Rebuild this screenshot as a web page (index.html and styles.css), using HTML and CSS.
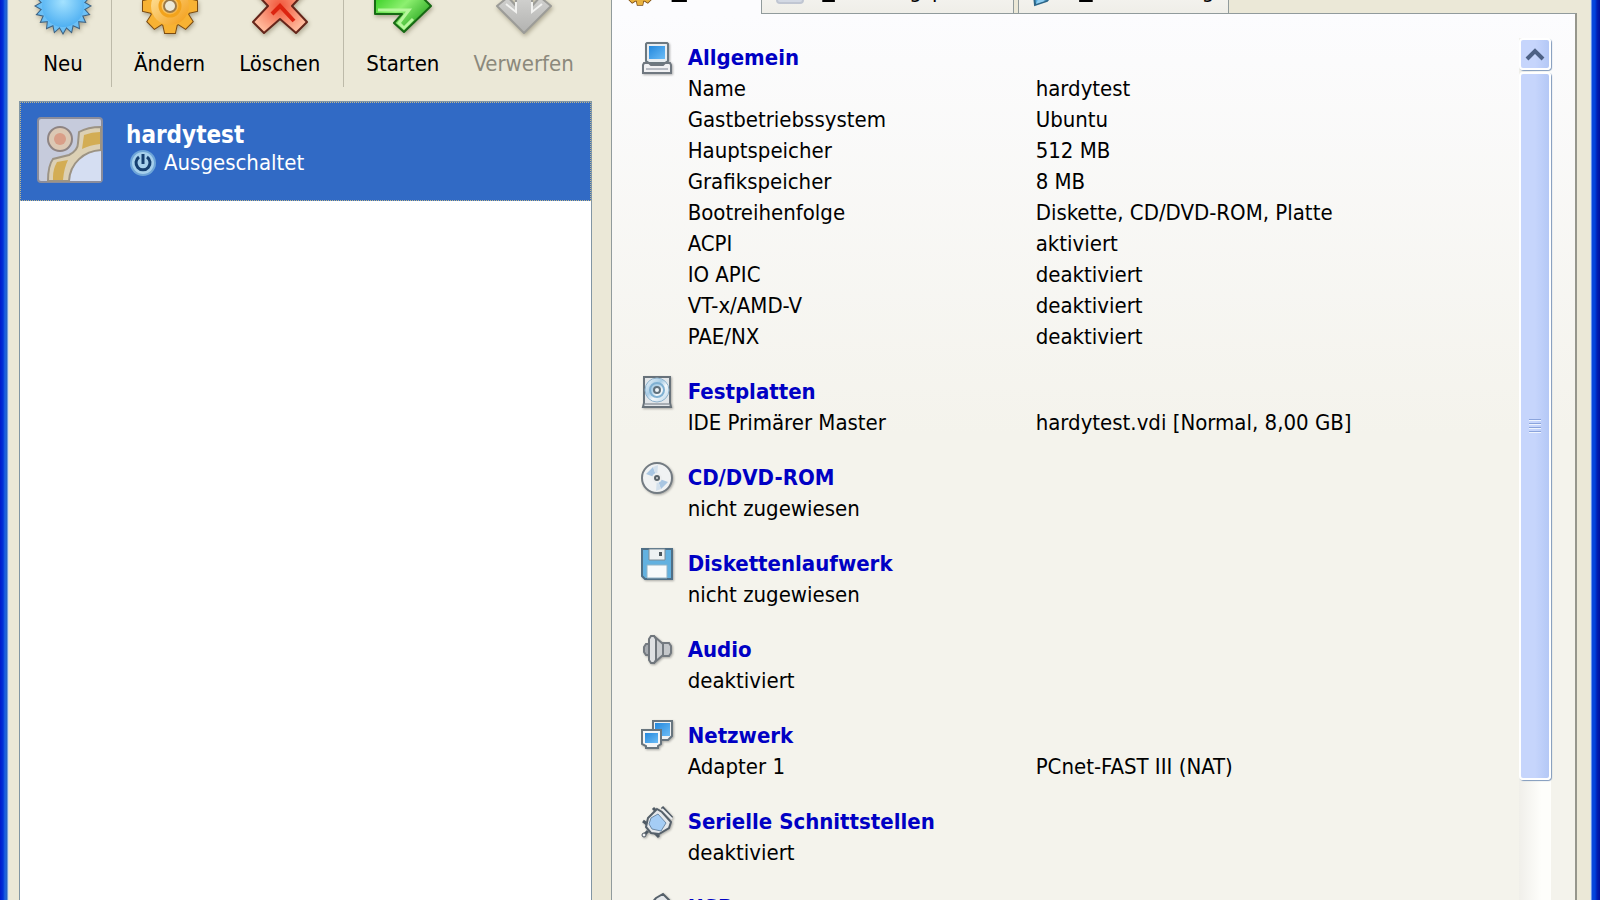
FILE: index.html
```html
<!DOCTYPE html>
<html lang="de">
<head>
    <meta charset="UTF-8">
    <meta name="viewport" content="width=device-width, initial-scale=1.0">
    <title>VirtualBox</title>
    <link rel="stylesheet" href="styles.css">
</head>
<body>
    <!-- Farbverläufe und wiederholte Formen -->
    <svg class="defs" aria-hidden="true">
        <defs>
            <radialGradient id="blau" cx="50%" cy="40%" r="60%">
                <stop offset="0" stop-color="#a4e2ff"/>
                <stop offset="1" stop-color="#4fb0f2"/>
            </radialGradient>
            <linearGradient id="gold" x1="0" y1="0" x2="1" y2="1">
                <stop offset="0" stop-color="#ffe9a8"/>
                <stop offset="1" stop-color="#f39a12"/>
            </linearGradient>
            <radialGradient id="rot" gradientUnits="userSpaceOnUse" cx="32" cy="34" r="28">
                <stop offset="0" stop-color="#f0553a"/>
                <stop offset="1" stop-color="#ffb89a"/>
            </radialGradient>
            <linearGradient id="gruen" x1="0" y1="0" x2="1" y2="1">
                <stop offset="0.2" stop-color="#3fd22a"/>
                <stop offset="0.5" stop-color="#8df070"/>
                <stop offset="0.9" stop-color="#1b9c16"/>
            </linearGradient>
            <linearGradient id="grau" x1="0" y1="0" x2="0" y2="1">
                <stop offset="0" stop-color="#e4e4e2"/>
                <stop offset="1" stop-color="#b2b2b0"/>
            </linearGradient>
            <linearGradient id="schirm" x1="0" y1="0" x2="1" y2="1">
                <stop offset="0" stop-color="#2388dd"/>
                <stop offset="1" stop-color="#6cbcf6"/>
            </linearGradient>
            <linearGradient id="scheibe" x1="0" y1="0" x2="1" y2="1">
                <stop offset="0" stop-color="#f4f8fb"/>
                <stop offset="0.4" stop-color="#a9cde6"/>
                <stop offset="0.6" stop-color="#f4f8fb"/>
                <stop offset="1" stop-color="#b4d2e6"/>
            </linearGradient>
            <path id="zacke" d="M0-27 4-20V20L0 27-4 20V-20z"/>
            <g id="stern">
                <circle r="21"/>
                <use href="#zacke"/>
                <use href="#zacke" transform="rotate(18)"/>
                <use href="#zacke" transform="rotate(36)"/>
                <use href="#zacke" transform="rotate(54)"/>
                <use href="#zacke" transform="rotate(72)"/>
                <use href="#zacke" transform="rotate(90)"/>
                <use href="#zacke" transform="rotate(108)"/>
                <use href="#zacke" transform="rotate(126)"/>
                <use href="#zacke" transform="rotate(144)"/>
                <use href="#zacke" transform="rotate(162)"/>
            </g>
            <g id="zahnrad">
                <circle r="20"/>
                <path d="M-7-18-5-27H5L7-18V18L5 27H-5L-7 18z"/>
                <path d="M-7-18-5-27H5L7-18V18L5 27H-5L-7 18z" transform="rotate(45)"/>
                <path d="M-7-18-5-27H5L7-18V18L5 27H-5L-7 18z" transform="rotate(90)"/>
                <path d="M-7-18-5-27H5L7-18V18L5 27H-5L-7 18z" transform="rotate(135)"/>
            </g>
        </defs>
    </svg>

    <div class="window">
        <div class="left">
            <div class="toolbar">
                <button class="tool tool-new">
                    <svg viewBox="0 0 64 64">
                        <g transform="translate(32 34)">
                            <use href="#stern" fill="#254a6c" stroke="#3a5f80" stroke-width="2"/>
                            <use href="#stern" fill="#6cc0f6"/>
                            <circle r="21" fill="url(#blau)"/>
                        </g>
                    </svg>
                    <span>Neu</span>
                </button>
                <div class="sep"></div>
                <button class="tool">
                    <svg viewBox="0 0 64 64">
                        <g transform="translate(32 34)">
                            <use href="#zahnrad" fill="#7a4a10" stroke="#7a4a10" stroke-width="2"/>
                            <use href="#zahnrad" fill="#f7b233"/>
                            <circle r="19" fill="url(#gold)"/>
                            <circle r="10" fill="none" stroke="#f2a31c" stroke-width="3"/>
                            <circle r="7" fill="#9a7a4a"/>
                            <circle r="5" fill="#ece9d8"/>
                        </g>
                    </svg>
                    <span>Ändern</span>
                </button>
                <button class="tool">
                    <svg viewBox="0 0 64 64">
                        <path d="M32 21 46 6 59 18 44 34 59 50 48 61 32 47 16 61 5 50 20 34 5 18 18 6z" fill="url(#rot)" stroke="#65251a" stroke-width="2" stroke-linejoin="round"/>
                        <path d="M24 42 32 34 46 49" fill="none" stroke="#dc2410" stroke-width="4"/>
                    </svg>
                    <span>Löschen</span>
                </button>
                <div class="sep"></div>
                <button class="tool">
                    <svg viewBox="0 0 64 64">
                        <path d="M4 25H31L23 16 33 7 60 34 33 60 23 51 31 42H4z" fill="url(#gruen)" stroke="#176a14" stroke-width="2" stroke-linejoin="round"/>
                        <path d="M7 38H38L28 51 33 56 42 47" fill="none" stroke="#b6f79c" stroke-width="3"/>
                    </svg>
                    <span>Starten</span>
                </button>
                <button class="tool" disabled>
                    <svg viewBox="0 0 64 64">
                        <path d="M24 4H40V34L48 25 59 34 32 61 5 34 16 25 24 34z" fill="url(#grau)" stroke="#9c9c98" stroke-width="2" stroke-linejoin="round"/>
                        <path d="M24 30V40L14 32M40 30V40L50 32" fill="none" stroke="#f2f2f0" stroke-width="2"/>
                    </svg>
                    <span>Verwerfen</span>
                </button>
            </div>

            <div class="vm-list">
                <button class="vm">
                    <svg class="vm-icon" viewBox="0 0 66 66">
                        <rect x="1" y="1" width="64" height="64" rx="3" fill="#c6cbdc" stroke="#8b8d9c" stroke-width="2"/>
                        <path d="M33 64C34 46 46 35 64 34V64z" fill="#d5def2"/>
                        <path d="M11 64C11 54 12 47 16 42L32 38C38 35 41 31 41 26L42 15C49 11 56 10 64 10V33C47 34 33 46 32 64z" fill="#dcd0b4" stroke="#9c9384" stroke-width="2"/>
                        <path d="M16 60Q16 52 20 45L31 43Q27 51 26 63H16zM47 18Q55 15 63 15V27Q53 28 45 32z" fill="#d3ad54"/>
                        <circle cx="23" cy="22" r="12" fill="#dcc8b4" stroke="#8e8483" stroke-width="2"/>
                        <circle cx="23" cy="22" r="6" fill="#d99e88"/>
                    </svg>
                    <span class="vm-text">
                        <span class="vm-name">hardytest</span>
                        <span class="vm-state">
                            <svg viewBox="0 0 28 28">
                                <circle cx="14" cy="14" r="13" fill="#6fa6d8"/>
                                <circle cx="14" cy="14" r="11" fill="#a6d0ec"/>
                                <path d="M10 8A7 7 0 1 0 18 8M14 5V15" fill="none" stroke="#153f70" stroke-width="3"/>
                            </svg>
                            Ausgeschaltet
                        </span>
                    </span>
                </button>
            </div>
        </div>

        <div class="right">
            <div class="tabs" role="tablist">
                <button class="tab active" role="tab" aria-selected="true">
                    <svg viewBox="0 0 64 64">
                        <g transform="translate(32 33)">
                            <use href="#zahnrad" fill="#7a4a10" stroke="#7a4a10" stroke-width="3"/>
                            <use href="#zahnrad" fill="#e9b23f"/>
                            <circle r="8" fill="#fcfcfe" stroke="#7a4a10" stroke-width="3"/>
                        </g>
                    </svg>
                    <span><u>D</u>etails</span>
                </button>
                <button class="tab" role="tab" aria-selected="false">
                    <svg viewBox="0 0 32 32">
                        <rect x="3" y="4" width="26" height="24" rx="3" fill="#d3d9e4" stroke="#c0c6d2" stroke-width="2"/>
                    </svg>
                    <span><u>S</u>icherungspunkte</span>
                </button>
                <button class="tab tab-last" role="tab" aria-selected="false">
                    <svg viewBox="0 0 32 32">
                        <path d="M4 30 3 20 20 4 27 12 16 26z" fill="#54a9dc" stroke="#2d6688" stroke-width="2"/>
                        <path d="M5 29 14 26 8 22z" fill="#8fcdf0"/>
                    </svg>
                    <span><u>B</u>eschreibung</span>
                </button>
            </div>

            <div class="panel">
                <div class="details">
                    <section>
                        <svg viewBox="0 0 32 32">
                            <path d="M6 1H26L27 2V19L24 21H8L5 19V2z" fill="#e9edf0" stroke="#6c7880" stroke-width="2"/>
                            <rect x="8" y="4" width="16" height="13" fill="url(#schirm)"/>
                            <path d="M3 21H8L10 23H22L24 21H29L30 23V31H2V23z" fill="#f1f1f3" stroke="#707880" stroke-width="2"/>
                            <path d="M5 27H27" stroke="#b8bcc4" stroke-width="2"/>
                        </svg>
                        <h2><a href="#allgemein">Allgemein</a></h2>
                        <dl>
                            <dt>Name</dt><dd>hardytest</dd>
                            <dt>Gastbetriebssystem</dt><dd>Ubuntu</dd>
                            <dt>Hauptspeicher</dt><dd>512 MB</dd>
                            <dt>Grafikspeicher</dt><dd>8 MB</dd>
                            <dt>Bootreihenfolge</dt><dd>Diskette, CD/DVD-ROM, Platte</dd>
                            <dt>ACPI</dt><dd>aktiviert</dd>
                            <dt>IO APIC</dt><dd>deaktiviert</dd>
                            <dt>VT-x/AMD-V</dt><dd>deaktiviert</dd>
                            <dt>PAE/NX</dt><dd>deaktiviert</dd>
                        </dl>
                    </section>
                    <section>
                        <svg viewBox="0 0 32 32">
                            <path d="M3 1H29V27L30 31H2L3 27z" fill="#e2e6e9" stroke="#68727a" stroke-width="2"/>
                            <circle cx="16" cy="14" r="12" fill="url(#scheibe)" stroke="#8fb3cc"/>
                            <circle cx="16" cy="14" r="7" fill="none" stroke="#7fb0d2" stroke-width="2"/>
                            <circle cx="16" cy="14" r="3" fill="#eef4f8" stroke="#60707c" stroke-width="2"/>
                            <path d="M4 28H28" stroke="#a8aeb4" stroke-width="2"/>
                        </svg>
                        <h2><a href="#festplatten">Festplatten</a></h2>
                        <dl>
                            <dt>IDE Primärer Master</dt><dd>hardytest.vdi [Normal, 8,00 GB]</dd>
                        </dl>
                    </section>
                    <section>
                        <svg viewBox="0 0 32 32">
                            <circle cx="16" cy="16" r="15" fill="#f0f2f3" stroke="#737b82" stroke-width="2"/>
                            <path d="M16 16 5 12 12 5zM16 16 27 20 20 27z" fill="#a9c6e2"/>
                            <path d="M16 16 12 5 17 3zM16 16 20 27 15 29z" fill="#d3e0ec"/>
                            <circle cx="16" cy="16" r="5" fill="#eceeef"/>
                            <circle cx="16" cy="16" r="2" fill="#d8dadb" stroke="#59636a" stroke-width="2"/>
                        </svg>
                        <h2><a href="#cd">CD/DVD-ROM</a></h2>
                        <dl>
                            <dt>nicht zugewiesen</dt>
                        </dl>
                    </section>
                    <section>
                        <svg viewBox="0 0 32 32">
                            <path d="M1 1H31V31H4L1 28z" fill="#62b1e0" stroke="#4f6f86" stroke-width="2"/>
                            <path d="M8 1H24V12H8z" fill="#edf1f2" stroke="#7c8c96"/>
                            <path d="M18 4H21V8H18z" fill="#4b565c"/>
                            <path d="M6 17H26V30H6z" fill="#f7fafb" stroke="#8fb2c6"/>
                        </svg>
                        <h2><a href="#diskette">Diskettenlaufwerk</a></h2>
                        <dl>
                            <dt>nicht zugewiesen</dt>
                        </dl>
                    </section>
                    <section>
                        <svg viewBox="0 0 32 32">
                            <path d="M8 10H5L3 13V18L5 21H8z" fill="#a7abb0" stroke="#747a80" stroke-width="2"/>
                            <path d="M14 3 22 10V21L14 28z" fill="#c9cccf" stroke="#747a80" stroke-width="2"/>
                            <path d="M8 5 10 2H13L15 5V26L13 29H10L8 26z" fill="#dfe1e3" stroke="#70767c" stroke-width="2"/>
                            <path d="M22 9H28L30 12V19L28 22H22z" fill="#c4c7ca" stroke="#747a80" stroke-width="2"/>
                        </svg>
                        <h2><a href="#audio">Audio</a></h2>
                        <dl>
                            <dt>deaktiviert</dt>
                        </dl>
                    </section>
                    <section>
                        <svg viewBox="0 0 32 32">
                            <path d="M12 1H31V16L27 20H12z" fill="#eef1f3" stroke="#68757e" stroke-width="2"/>
                            <rect x="14" y="3" width="15" height="13" fill="url(#schirm)"/>
                            <path d="M1 10H20V24L17 26V28H5V26L1 24z" fill="#f3f5f6" stroke="#68757e" stroke-width="2"/>
                            <rect x="4" y="13" width="13" height="10" fill="url(#schirm)"/>
                        </svg>
                        <h2><a href="#netzwerk">Netzwerk</a></h2>
                        <dl>
                            <dt>Adapter 1</dt><dd>PCnet-FAST III (NAT)</dd>
                        </dl>
                    </section>
                    <section>
                        <svg viewBox="0 0 32 32">
                            <path d="M2 30 7 25M12 2 16 6M21 1 31 12M2 15 6 18M18 31 14 27" stroke="#4f5a64" stroke-width="3"/>
                            <path d="M16 3 21 6 30 16 28 22 18 28 10 27 5 21 7 12z" fill="#e4e7ea" stroke="#55606a" stroke-width="2"/>
                            <path d="M10 12 17 8 25 17 20 25 11 23 8 18z" fill="#a5cdf5" stroke="#6d8aa6"/>
                            <path d="M21 3 31 13" stroke="#eceef0" stroke-width="2"/>
                            <circle cx="3" cy="29" r="2" fill="#f2f3f4" stroke="#4f5a64"/>
                        </svg>
                        <h2><a href="#seriell">Serielle Schnittstellen</a></h2>
                        <dl>
                            <dt>deaktiviert</dt>
                        </dl>
                    </section>
                    <section>
                        <svg viewBox="0 0 32 32">
                            <path d="M15 6 22 2 28 8 25 14 12 29 3 20z" fill="#e4e7ea" stroke="#55606a" stroke-width="2"/>
                        </svg>
                        <h2><a href="#usb">USB</a></h2>
                    </section>
                </div>

                <div class="scrollbar">
                    <button class="scroll-up" aria-label="Nach oben">
                        <svg viewBox="0 0 20 14"><path d="M2 12 10 4 18 12" fill="none" stroke="#4d6185" stroke-width="4"/></svg>
                    </button>
                    <div class="thumb">
                        <i></i><i></i><i></i><i></i>
                    </div>
                </div>
            </div>
        </div>
    </div>
</body>
</html>
```
FILE: styles.css
```css
* {
    box-sizing: border-box;
}

body {
    margin: 0;
    height: 100vh;
    overflow: hidden;
    font-family: "DejaVu Sans Condensed", "DejaVu Sans", Tahoma, sans-serif;
    font-size: 22px;
    line-height: 31px;
    color: #000;
    background-color: #ebe8d7;
}

button {
    font: inherit;
    color: inherit;
    background: none;
    border: 0;
    padding: 0;
    margin: 0;
}

.defs {
    position: absolute;
    width: 0;
    height: 0;
}

/* Fenster, oben abgeschnitten */
.window {
    display: grid;
    grid-template-columns: 16fr 27fr;
    gap: 19px;
    height: calc(100vh + 36px);
    margin-top: -36px;
    padding: 0 23px 0 19px;
    background:
        linear-gradient(to right, #0018cc 0, #0030d8 3px, #1c62e2 5px, #2560c0 7px, #c4dcf4 8px, transparent 9px),
        linear-gradient(to left, #00109c 0, #0020b4 3px, #0042dc 5px, #0848dc 8px, #c4dcf4 9px, transparent 10px);
}

.left,
.right {
    display: flex;
    flex-direction: column;
    min-width: 0;
    min-height: 0;
}

/* Werkzeugleiste */
.toolbar {
    display: flex;
    padding-left: 2px;
    margin-bottom: 14px;
}

.tool {
    display: flex;
    flex-direction: column;
    align-items: center;
    gap: 12px;
    padding: 8px 17px;
}

.tool-new {
    min-width: 84px;
}

.tool svg {
    width: 64px;
    height: 64px;
    margin: 0 -8px;
    filter: drop-shadow(1px 2px 2px rgba(80, 70, 40, 0.4));
}

.tool:disabled {
    color: #8b897c;
}

.sep {
    width: 1px;
    margin: 0 5px 0 6px;
    background-color: #bdbaa9;
}

/* Liste der Maschinen */
.vm-list {
    flex: 1;
    background-color: #fff;
    border: 1px solid #8296a4;
    border-bottom: 0;
}

.vm {
    display: flex;
    align-items: flex-start;
    gap: 23px;
    width: 100%;
    height: 99px;
    padding: 14px 16px;
    text-align: left;
    color: #fff;
    background-color: #316ac5;
    border: 1px dotted #c0b88c;
}

.vm-icon {
    width: 66px;
    height: 66px;
}

.vm-text {
    display: flex;
    flex-direction: column;
    line-height: 28px;
    padding-top: 4px;
}

.vm-name {
    font-size: 24px;
    font-weight: bold;
}

.vm-state {
    display: flex;
    align-items: center;
    gap: 7px;
    padding-left: 3px;
}

.vm-state svg {
    width: 28px;
    height: 28px;
}

/* Reiter */
.tabs {
    display: flex;
    height: 50px;
}

.tab {
    display: flex;
    align-items: flex-start;
    gap: 16px;
    padding: 10px 12px 0;
    background: linear-gradient(#fcfcfa, #efeee8);
    border: 1px solid #919b9c;
    border-left-width: 0;
}

.tab svg {
    width: 32px;
    height: 32px;
}

.tab u {
    text-decoration-thickness: 2px;
    text-underline-offset: 2px;
}

/* der aktive Reiter verdeckt die Oberkante */
.tab.active {
    z-index: 1;
    padding-right: 21px;
    background: #fcfcfe;
    border-left-width: 1px;
    border-bottom: 0;
}

.tab-last {
    margin-left: 4px;
    padding-right: 14px;
    border-left-width: 1px;
}

/* Detailansicht */
.panel {
    flex: 1;
    display: flex;
    min-height: 0;
    margin-top: -1px;
    padding: 24px 24px 0 29px;
    background: linear-gradient(#fcfcfe, #f4f3ec 420px);
    border: 1px solid #919b9c;
    border-right: 2px solid #96968c;
    border-bottom: 0;
    overflow: hidden;
}

.details {
    flex: 1;
    display: flex;
    flex-direction: column;
    gap: 24px;
    padding-top: 4px;
    overflow: hidden;
}

section {
    flex: none;
    display: grid;
    grid-template-columns: 32px 1fr;
    column-gap: 15px;
}

section svg {
    width: 32px;
    height: 32px;
    margin-bottom: -1px;
    filter: drop-shadow(1px 1px 1px rgba(0, 0, 0, 0.3));
}

section h2 {
    margin: 0;
    font-size: 22px;
}

section h2 a {
    color: #0000c4;
    text-decoration: none;
}

section dl {
    grid-column: 2;
    display: grid;
    grid-template-columns: 348px 1fr;
    margin: 0;
}

section dt {
    grid-column: 1;
}

section dd {
    margin: 0;
}

/* Bildlaufleiste */
.scrollbar {
    display: flex;
    flex-direction: column;
    gap: 2px;
    width: 32px;
    background: linear-gradient(to right, #f0efea, #fefefb 70%);
}

.scroll-up,
.thumb {
    display: flex;
    align-items: center;
    justify-content: center;
    border: 2px solid #fff;
    border-radius: 4px;
    background: linear-gradient(to right, #c6d5fc 50%, #b4c8f6);
    box-shadow: 1px 1px 1px #7f98bb;
}

.scroll-up {
    height: 32px;
}

.scroll-up svg {
    width: 20px;
    height: 14px;
}

.thumb {
    flex-direction: column;
    gap: 2px;
    height: calc(100% - 154px);
}

.thumb i {
    width: 12px;
    height: 2px;
    background-color: #8ba4dc;
    border-bottom: 1px solid #eef4fe;
}
```
